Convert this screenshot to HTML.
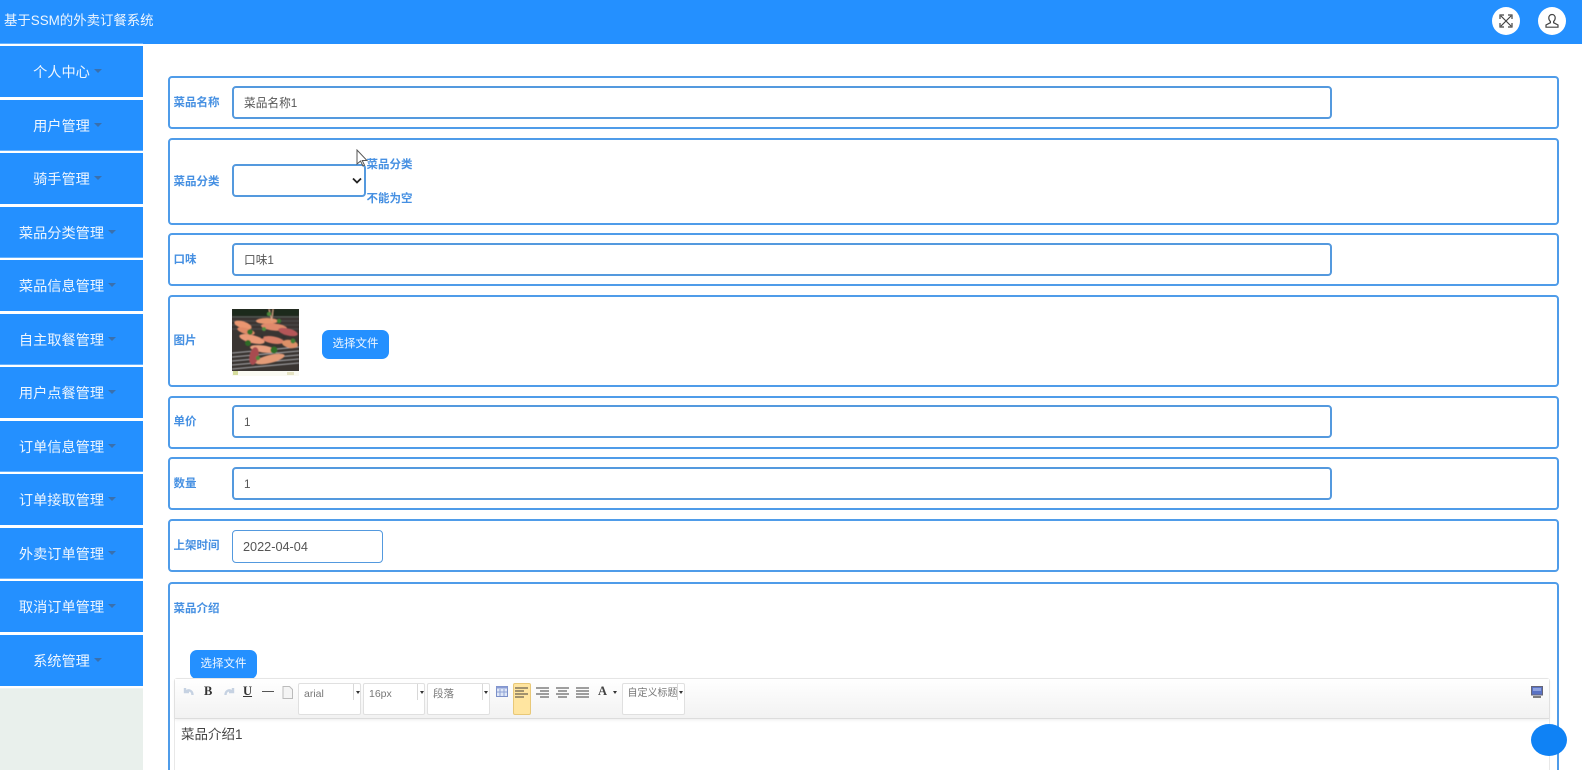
<!DOCTYPE html>
<html lang="zh">
<head>
<meta charset="utf-8">
<title>基于SSM的外卖订餐系统</title>
<style>
*{box-sizing:border-box}
html,body{margin:0;padding:0;width:1582px;height:770px;overflow:hidden;background:#fff;font-family:"Liberation Sans","Noto Sans CJK SC",sans-serif;color:#555}
#wrap{position:absolute;left:0;top:0;width:1582px;height:770px;overflow:hidden;background:#fff}
#inner{position:absolute;left:0;top:0;width:1582px;height:770px;overflow:hidden;filter:blur(.35px)}
.abs{position:absolute}
#hd{left:0;top:0;width:1582px;height:43.5px;background:#2490ff}
#title{left:4px;top:12px;font-size:13.4px;line-height:17px;color:#eef6ff;white-space:nowrap}
.circ{width:28px;height:28px;border-radius:50%;background:#fff;top:7px}
#side{left:0;top:43.5px;width:143px;height:727px;background:#e9f0ec}
.mi{left:0;width:143px;height:51.2px;padding-right:20px;background:#2490ff;color:#eef6ff;font-size:14.2px;line-height:55px;text-align:center;white-space:nowrap;box-shadow:0 -2.3px 0 #fff,0 2.3px 0 #fff}
.mi i{display:inline-block;width:0;height:0;border-left:4px solid transparent;border-right:4px solid transparent;border-top:4px solid #3a70ad;margin-left:4px;margin-right:-12px;vertical-align:4px}
.row{left:168px;width:1391px;border:2px solid #4f9ce9;border-radius:4px;background:#fff}
.lb{left:173.5px;font-size:11.5px;line-height:16px;font-weight:700;color:#4690e2;white-space:nowrap;margin-top:1px}
.ip{left:232px;width:1100px;height:33px;border:2px solid #5499de;border-radius:4px;background:#fff;font-size:11.7px;line-height:31px;padding-left:10px;color:#555}
.btn{width:67px;height:28.5px;border-radius:7px;background:#2490ff;color:#eef6ff;font-size:11.5px;line-height:28px;text-align:center}
.tb{font-size:11px;color:#444;white-space:nowrap}
.sel{top:683px;height:32px;background:#fff;border:1px solid #e0e0e0;border-radius:2px;font-size:10.5px;color:#777;padding:3px 0 0 5px;line-height:14px;white-space:nowrap;overflow:hidden}
.sel:after{content:"";position:absolute;right:6px;top:0;width:1px;height:16px;background:#d8d8d8}
.ar{width:0;height:0;border-left:2.5px solid transparent;border-right:2.5px solid transparent;border-top:3.5px solid #333;top:691px}
</style>
</head>
<body>
<div id="wrap"><div id="inner">
<div class="abs" id="hd"></div>
<div class="abs" id="title">基于SSM的外卖订餐系统</div>
<div class="abs circ" style="left:1492px"></div>
<svg class="abs" style="left:1498px;top:13px" width="16" height="16" viewBox="0 0 16 16" fill="none" stroke="#444" stroke-width="1.2"><path d="M3 3l10 10M13 3L3 13M2 6V2h4M10 2h4v4M14 10v4h-4M6 14H2v-4"/></svg>
<div class="abs circ" style="left:1538px"></div>
<svg class="abs" style="left:1544px;top:13px" width="16" height="16" viewBox="0 0 16 16" fill="none" stroke="#444" stroke-width="1.2"><path d="M8 1.500c-2 0-3.200 1.500-3.200 3.400 0 1.600.7 2.900 1.600 3.600v1.200L2 12v2.200h12V12l-4.400-2.300V8.500c.9-.7 1.600-2 1.600-3.600C11.200 3 10 1.500 8 1.500z"/></svg>

<div class="abs" id="side"></div>
<div class="abs mi" style="top:46px">个人中心<i></i></div>
<div class="abs mi" style="top:99.500px">用户管理<i></i></div>
<div class="abs mi" style="top:153px">骑手管理<i></i></div>
<div class="abs mi" style="top:206.700px">菜品分类管理<i></i></div>
<div class="abs mi" style="top:260.200px">菜品信息管理<i></i></div>
<div class="abs mi" style="top:313.700px">自主取餐管理<i></i></div>
<div class="abs mi" style="top:367.200px">用户点餐管理<i></i></div>
<div class="abs mi" style="top:420.700px">订单信息管理<i></i></div>
<div class="abs mi" style="top:474px">订单接取管理<i></i></div>
<div class="abs mi" style="top:527.500px">外卖订单管理<i></i></div>
<div class="abs mi" style="top:581px">取消订单管理<i></i></div>
<div class="abs mi" style="top:634.500px">系统管理<i></i></div>

<div class="abs row" style="top:76px;height:53px"></div>
<div class="abs lb" style="top:94px">菜品名称</div>
<div class="abs ip" style="top:85.500px">菜品名称1</div>

<div class="abs row" style="top:137.500px;height:87px"></div>
<div class="abs lb" style="top:173px">菜品分类</div>
<div class="abs ip" style="top:164px;width:134px"></div>
<svg class="abs" style="left:351px;top:176px" width="12" height="10" viewBox="0 0 12 10" fill="none" stroke="#222" stroke-width="1.800"><path d="M2 2.500l4 4 4-4"/></svg>
<div class="abs lb" style="left:366.500px;top:156px">菜品分类</div>
<div class="abs lb" style="left:366.500px;top:190px">不能为空</div>
<svg class="abs" style="left:356px;top:149px" width="12" height="18" viewBox="0 0 12 18"><path d="M1 1v14l3.500-3 2.500 5 1.500-.8-2.300-4.700H11z" fill="#fff" stroke="#555" stroke-width="1"/></svg>

<div class="abs row" style="top:233px;height:53px"></div>
<div class="abs lb" style="top:251px">口味</div>
<div class="abs ip" style="top:243px">口味1</div>

<div class="abs row" style="top:294.500px;height:92px"></div>
<div class="abs lb" style="top:332px">图片</div>
<svg class="abs" style="left:232px;top:309px" width="67" height="67" viewBox="0 0 67 67">
<defs><filter id="b" x="-10%" y="-10%" width="120%" height="120%"><feGaussianBlur stdDeviation=".6"/></filter></defs>
<rect width="67" height="67" fill="#fff"/>
<rect width="67" height="62" fill="#3a3532"/>
<g filter="url(#b)">
<rect width="67" height="7" fill="#1f2a1c"/>
<path d="M0 8h67" stroke="#55605a" stroke-width="1"/>
<path d="M0 44l67-6M0 48l67-6M0 52l67-6M0 56l67-6M0 60l67-6" stroke="#a8a8ac" stroke-width="1.100"/>
<path d="M0 12h67M0 16h67M0 20h67" stroke="#5a5a5a" stroke-width=".8"/>
<ellipse cx="11" cy="16" rx="9" ry="3.500" fill="#ea9670" transform="rotate(18 11 16)"/>
<ellipse cx="14" cy="22" rx="9" ry="3" fill="#df8a68" transform="rotate(15 14 22)"/>
<ellipse cx="35" cy="12" rx="11" ry="3" fill="#e6946e"/>
<ellipse cx="42" cy="18" rx="13" ry="3.500" fill="#e08a6c" transform="rotate(6 42 18)"/>
<ellipse cx="56" cy="23" rx="10" ry="3.500" fill="#b55658" transform="rotate(14 56 23)"/>
<ellipse cx="20" cy="30" rx="13" ry="4" fill="#ea9a78" transform="rotate(14 20 30)"/>
<ellipse cx="41" cy="31" rx="11" ry="3.500" fill="#d98068" transform="rotate(10 41 31)"/>
<ellipse cx="58" cy="35" rx="8" ry="4" fill="#dd9068" transform="rotate(10 58 35)"/>
<ellipse cx="31" cy="40" rx="13" ry="3.500" fill="#eaa080" transform="rotate(8 31 40)"/>
<ellipse cx="38" cy="50" rx="15" ry="4" fill="#e49c78" transform="rotate(-14 38 50)"/>
<ellipse cx="22" cy="47" rx="4.500" ry="9" fill="#a84c50" transform="rotate(12 22 47)"/>
<path d="M37 0l3 12M41 0l-1 10" stroke="#d8a888" stroke-width="1"/>
<circle cx="18" cy="23" r="2.800" fill="#356f2c"/>
<circle cx="32" cy="20" r="2" fill="#4f8e3c"/>
<circle cx="47" cy="12" r="2.200" fill="#3c7c30"/>
<circle cx="37" cy="5" r="2" fill="#4b8b3a"/>
<circle cx="16" cy="34" r="3" fill="#2f6a28"/>
<circle cx="42" cy="41" r="3.500" fill="#2f6e28"/>
<circle cx="61" cy="32" r="2.500" fill="#3f7d35"/>
<circle cx="26" cy="49" r="2.200" fill="#4d8a3a"/>
<circle cx="30" cy="28" r="1.800" fill="#333"/>
<circle cx="52" cy="28" r="1.800" fill="#333"/>
</g>
<rect y="62" width="67" height="5" fill="#fafaf2"/>
<rect x="1" y="62" width="5" height="4" fill="#d5dc9c"/>
<rect x="55" y="63" width="7" height="3" fill="#e4e2c2"/>
</svg>
<div class="abs btn" style="left:322px;top:330px">选择文件</div>

<div class="abs row" style="top:395.500px;height:53px"></div>
<div class="abs lb" style="top:413px">单价</div>
<div class="abs ip" style="top:405px">1</div>

<div class="abs row" style="top:457px;height:53px"></div>
<div class="abs lb" style="top:475px">数量</div>
<div class="abs ip" style="top:467px">1</div>

<div class="abs row" style="top:519.300px;height:53px"></div>
<div class="abs lb" style="top:537px">上架时间</div>
<div class="abs ip" style="top:530px;width:151px;border-width:1px;font-size:12.700px;line-height:32px">2022-04-04</div>

<div class="abs row" style="top:582px;height:210px"></div>
<div class="abs lb" style="top:600px">菜品介绍</div>
<div class="abs btn" style="left:190px;top:650px">选择文件</div>

<div class="abs" style="left:174px;top:678px;width:1376px;height:120px;border:1px solid #e8e8e8;border-radius:3px;background:#fff"></div>
<div class="abs" style="left:175px;top:679px;width:1374px;height:40px;background:linear-gradient(#fff,#f2f2f2);border-bottom:1px solid #dcdcdc;box-shadow:0 1px 3px rgba(0,0,0,.08)"></div>
<svg class="abs" style="left:182px;top:686px" width="14" height="13" viewBox="0 0 14 13" fill="none" stroke="#c6d2e2" stroke-width="2.400"><path d="M3 2v4h4M3.500 6c3-3 7-1.500 7 3"/></svg>
<div class="abs tb" style="left:204px;top:684px;font:bold 12.500px 'Liberation Serif',serif;color:#333">B</div>
<svg class="abs" style="left:222px;top:686px" width="14" height="13" viewBox="0 0 14 13" fill="none" stroke="#c6d2e2" stroke-width="2.400"><path d="M11 2v4H7M10.500 6c-3-3-7-1.500-7 3"/></svg>
<div class="abs tb" style="left:243px;top:684px;font:bold 12.500px 'Liberation Serif',serif;color:#333;text-decoration:underline">U</div>
<div class="abs" style="left:262px;top:691px;width:12px;height:1.300px;background:#555"></div>
<svg class="abs" style="left:282px;top:686px" width="11" height="13" viewBox="0 0 11 13" fill="#f4f4f4" stroke="#bbb"><path d="M1 .5h6.500l3 3v9H1z"/></svg>

<div class="abs sel" style="left:298px;width:63px">arial</div>
<div class="abs ar" style="left:356px"></div>
<div class="abs sel" style="left:363px;width:62px">16px</div>
<div class="abs ar" style="left:420px"></div>
<div class="abs sel" style="left:427px;width:63px">段落</div>
<div class="abs ar" style="left:484px"></div>

<svg class="abs" style="left:496px;top:686px" width="12" height="11" viewBox="0 0 12 11"><rect x=".5" y=".5" width="11" height="10" fill="#dfe7f7" stroke="#7b8fc8"/><rect x=".5" y=".5" width="11" height="2" fill="#8a9cd4"/><path d="M4 3v7M8 3v7M1 6h10" stroke="#8fa3d6"/></svg>
<div class="abs" style="left:512.500px;top:683px;width:18px;height:32px;background:#ffe5a0;border:1px solid #e8c878;border-radius:2px"></div>
<svg class="abs" style="left:515px;top:687px" width="13" height="12" viewBox="0 0 13 12" stroke="#6a6050" stroke-width="1.300"><path d="M0 1h13M0 4h9M0 7h13M0 10h9"/></svg>
<svg class="abs" style="left:536px;top:687px" width="13" height="12" viewBox="0 0 13 12" stroke="#666" stroke-width="1.300"><path d="M0 1h13M4 4h9M0 7h13M4 10h9"/></svg>
<svg class="abs" style="left:556px;top:687px" width="13" height="12" viewBox="0 0 13 12" stroke="#666" stroke-width="1.300"><path d="M0 1h13M2 4h9M0 7h13M2 10h9"/></svg>
<svg class="abs" style="left:576px;top:687px" width="13" height="12" viewBox="0 0 13 12" stroke="#666" stroke-width="1.300"><path d="M0 1h13M0 4h13M0 7h13M0 10h13"/></svg>
<div class="abs tb" style="left:598px;top:684px;font:bold 12.500px 'Liberation Serif',serif;color:#444">A</div>
<div class="abs ar" style="left:613px;top:691px"></div>
<div class="abs sel" style="left:621.500px;width:63px;font-size:10px">自定义标题</div>
<div class="abs ar" style="left:679px"></div>

<svg class="abs" style="left:1531px;top:686px" width="12" height="12" viewBox="0 0 12 12"><rect x=".5" y=".5" width="11" height="8.500" fill="#5a72c4" stroke="#667"/><rect x="2" y="2" width="8" height="3" fill="#8ea2e0"/><path d="M2 11h8" stroke="#555" stroke-width="1.500"/></svg>

<div class="abs" style="left:181px;top:726px;font-size:13.500px;line-height:18px;color:#444">菜品介绍1</div>

<div class="abs" style="left:1531px;top:723.500px;width:36px;height:32px;border-radius:50%;background:#0f82f5"></div>
</div></div>
</body>
</html>
